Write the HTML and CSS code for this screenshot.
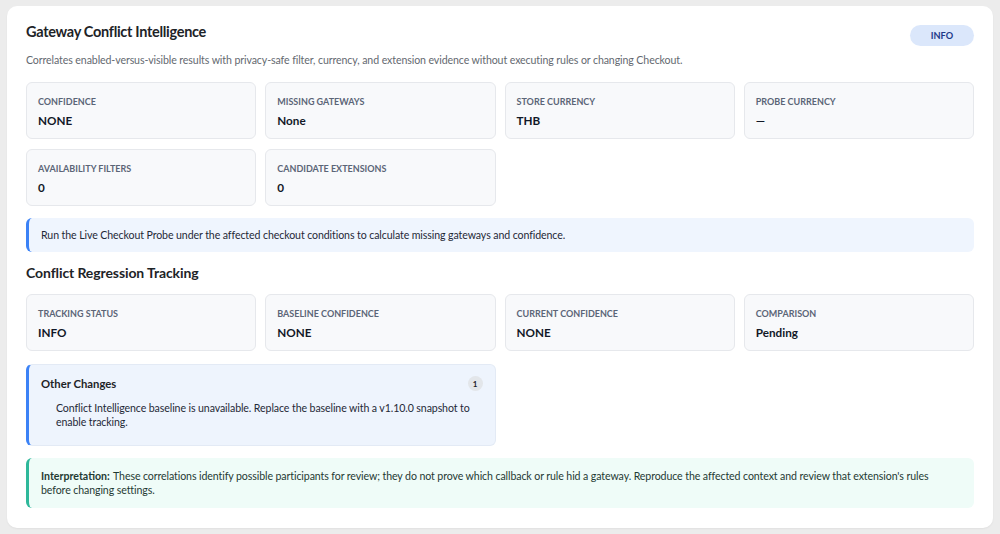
FILE: index.html
```html
<!DOCTYPE html>
<html lang="en">
<head>
  <meta charset="UTF-8">
  <meta name="viewport" content="width=device-width, initial-scale=1.0">
  <title>Gateway Conflict Intelligence</title>
  <link rel="stylesheet" href="styles.css">
</head>
<body>

<div class="panel">
  <!-- Header -->
  <div class="panel-header">
    <h2>Gateway Conflict Intelligence</h2>
    <span class="badge-info">INFO</span>
  </div>
  <p class="subtitle">Correlates enabled-versus-visible results with privacy-safe filter, currency, and extension evidence without executing rules or changing Checkout.</p>

  <!-- Conflict stats -->
  <div class="stat-grid">
    <div class="stat">
      <div class="stat-label">Confidence</div>
      <div class="stat-value">NONE</div>
    </div>
    <div class="stat">
      <div class="stat-label">Missing Gateways</div>
      <div class="stat-value">None</div>
    </div>
    <div class="stat">
      <div class="stat-label">Store Currency</div>
      <div class="stat-value">THB</div>
    </div>
    <div class="stat">
      <div class="stat-label">Probe Currency</div>
      <div class="stat-value">—</div>
    </div>
    <div class="stat">
      <div class="stat-label">Availability Filters</div>
      <div class="stat-value">0</div>
    </div>
    <div class="stat">
      <div class="stat-label">Candidate Extensions</div>
      <div class="stat-value">0</div>
    </div>
  </div>

  <div class="notice notice-blue">
    Run the Live Checkout Probe under the affected checkout conditions to calculate missing gateways and confidence.
  </div>

  <!-- Regression tracking -->
  <h3 class="section-title">Conflict Regression Tracking</h3>
  <div class="stat-grid">
    <div class="stat">
      <div class="stat-label">Tracking Status</div>
      <div class="stat-value">INFO</div>
    </div>
    <div class="stat">
      <div class="stat-label">Baseline Confidence</div>
      <div class="stat-value">NONE</div>
    </div>
    <div class="stat">
      <div class="stat-label">Current Confidence</div>
      <div class="stat-value">NONE</div>
    </div>
    <div class="stat">
      <div class="stat-label">Comparison</div>
      <div class="stat-value">Pending</div>
    </div>
  </div>

  <div class="change-grid">
    <div class="change-card">
      <div class="change-header">
        <h4>Other Changes</h4>
        <span class="count">1</span>
      </div>
      <ul class="change-list">
        <li>Conflict Intelligence baseline is unavailable. Replace the baseline with a v1.10.0 snapshot to enable tracking.</li>
      </ul>
    </div>
  </div>

  <div class="notice notice-green">
    <strong>Interpretation:</strong> These correlations identify possible participants for review; they do not prove which callback or rule hid a gateway. Reproduce the affected context and review that extension's rules before changing settings.
  </div>
</div>

</body>
</html>
```

FILE: styles.css
```css
/* Global Styles */
* {
  box-sizing: border-box;
}

body {
  font-family: Lato, "Noto Sans", sans-serif;
  background-color: #ececec;
  color: #1d2327;
  margin: 0;
  padding: 6px 7px;
}

/* Panel */
.panel {
  background-color: #ffffff;
  border-radius: 10px;
  padding: 14px 19px 20px;
  box-shadow: 0 1px 2px rgba(0, 0, 0, 0.05);
}

.panel-header {
  display: flex;
  justify-content: space-between;
  align-items: flex-start;
  height: 28px;
}

.panel-header h2 {
  font-size: 14.5px;
  font-weight: 700;
  letter-spacing: -0.3px;
  color: #1d2327;
  margin: 3px 0 0;
}

.badge-info {
  background-color: #dbe7fb;
  color: #1e3a8a;
  font-size: 9.2px;
  font-weight: 700;
  line-height: 12px;
  width: 64px;
  text-align: center;
  padding: 5px 0 4px;
  border-radius: 11px;
  margin-top: 5px;
}

.subtitle {
  font-size: 10.6px;
  letter-spacing: -0.1px;
  line-height: 14px;
  color: #646970;
  margin: 5px 0 15px;
}

/* Stat Cards */
.stat-grid {
  display: grid;
  grid-template-columns: repeat(4, 1fr);
  gap: 10px 9px;
}

.stat {
  background-color: #f8f9fb;
  border: 1px solid #e6e8ec;
  border-radius: 6px;
  padding: 13px 11px 10px;
  height: 57px;
}

.stat-label {
  font-size: 9px;
  font-weight: 700;
  color: #5b6577;
  text-transform: uppercase;
  margin-bottom: 6px;
}

.stat-value {
  font-size: 11.7px;
  font-weight: 700;
  color: #111827;
}

/* Notices */
.notice {
  border-radius: 6px;
  font-size: 10.6px;
  letter-spacing: -0.1px;
  line-height: 14px;
}

.notice-blue {
  background-color: #eff5fe;
  border-left: 3px solid #3b82f6;
  color: #1f2937;
  margin-top: 12px;
  padding: 10px 12px;
}

.notice-green {
  background-color: #effcf8;
  border-left: 3px solid #2eb89a;
  color: #1f3a33;
  margin-top: 12px;
  padding: 11px 30px 11px 12px;
}

.notice-green strong {
  font-weight: 700;
  letter-spacing: 0;
  margin-right: 1px;
}

.section-title {
  font-size: 14px;
  font-weight: 700;
  letter-spacing: -0.1px;
  color: #1d2327;
  margin: 12px 0 13px;
}

/* Change Cards */
.change-grid {
  display: grid;
  grid-template-columns: 1fr 1fr;
  gap: 9px;
  margin-top: 13px;
}

.change-card {
  background-color: #eef4fd;
  border: 1px solid #e3eaf5;
  border-left: 3px solid #3b82f6;
  border-radius: 6px;
  padding: 11px 12px 16px;
}

.change-header {
  display: flex;
  justify-content: space-between;
  align-items: center;
}

.change-header h4 {
  font-size: 11.3px;
  font-weight: 700;
  color: #1d2327;
  margin: 0;
}

.count {
  background-color: #e3e6ea;
  color: #1d2327;
  font-size: 8px;
  font-weight: 700;
  width: 15px;
  height: 15px;
  border-radius: 50%;
  display: flex;
  align-items: center;
  justify-content: center;
}

.change-list {
  list-style: none;
  margin: 10px 0 0;
  padding-left: 15px;
  font-size: 10.6px;
  letter-spacing: -0.1px;
  line-height: 14px;
  color: #1f2937;
}
```
